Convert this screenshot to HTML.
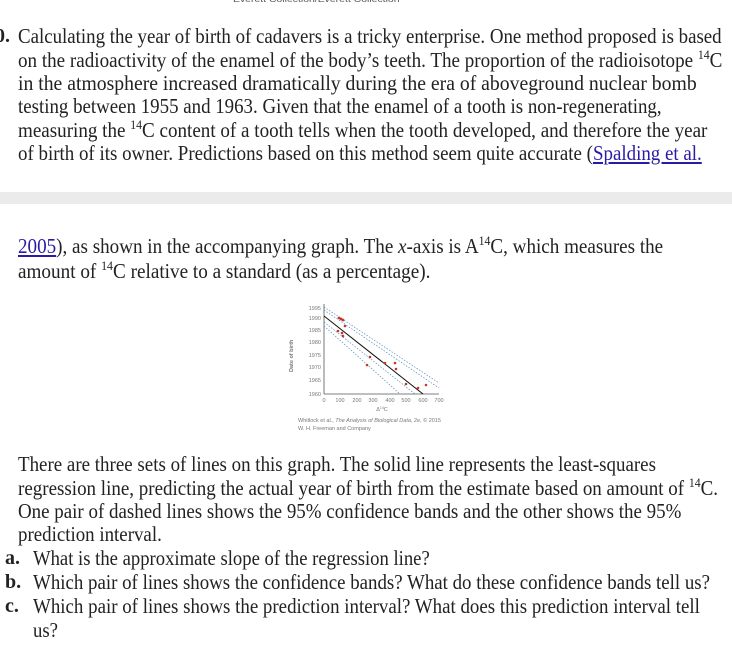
<!DOCTYPE html>
<html><head><meta charset="utf-8"><style>
html,body{margin:0;padding:0;background:#fff;width:732px;height:654px;overflow:hidden;position:relative}
.l{position:absolute;white-space:nowrap;font-family:"Liberation Serif",serif;font-size:21px;line-height:24px;color:#222;transform-origin:0 0;transform:scaleX(0.85)}
sup{font-size:13px;vertical-align:0;position:relative;top:-8px}
a{color:#2a1aa8;text-decoration:underline}
.b{position:absolute;font-family:"Liberation Serif",serif;font-size:20px;line-height:24px;font-weight:bold;color:#222}
svg{position:absolute;left:0;top:0}
.g{font-family:"Liberation Sans",sans-serif;font-size:5.5px;fill:#777}
.h{position:absolute;left:233px;top:-5px;font:8px 'Liberation Sans',sans-serif;color:#555;white-space:nowrap;transform-origin:0 0}
</style></head><body>
<div class="h" data-w="167">Everett Collection/Everett Collection</div>
<div style="position:absolute;left:0;top:192px;width:732px;height:12px;background:#ebebeb"></div>
<div class="b" style="left:-5px;top:24px">0.</div>
<div class="l" data-w="704" style="left:18px;top:24px">Calculating the year of birth of cadavers is a tricky enterprise. One method proposed is based</div>
<div class="l" data-w="704" style="left:18px;top:48px">on the radioactivity of the enamel of the body’s teeth. The proportion of the radioisotope <sup>14</sup>C</div>
<div class="l" data-w="679" style="left:18px;top:71px">in the atmosphere increased dramatically during the era of aboveground nuclear bomb</div>
<div class="l" data-w="644" style="left:18px;top:94px">testing between 1955 and 1963. Given that the enamel of a tooth is non-regenerating,</div>
<div class="l" data-w="689" style="left:18px;top:118px">measuring the <sup>14</sup>C content of a tooth tells when the tooth developed, and therefore the year</div>
<div class="l" data-w="684" style="left:18px;top:141px">of birth of its owner. Predictions based on this method seem quite accurate (<a>Spalding et al.</a></div>
<div class="l" data-w="645" style="left:18px;top:234px"><a>2005</a>), as shown in the accompanying graph. The <i>x</i>-axis is A<sup>14</sup>C, which measures the</div>
<div class="l" data-w="412" style="left:18px;top:259px">amount of <sup>14</sup>C relative to a standard (as a percentage).</div>
<div class="l" data-w="638" style="left:18px;top:452px">There are three sets of lines on this graph. The solid line represents the least-squares</div>
<div class="l" data-w="700" style="left:18px;top:476px">regression line, predicting the actual year of birth from the estimate based on amount of <sup>14</sup>C.</div>
<div class="l" data-w="663" style="left:18px;top:499px">One pair of dashed lines shows the 95% confidence bands and the other shows the 95%</div>
<div class="l" data-w="144" style="left:18px;top:522px">prediction interval.</div>
<div class="b" style="left:5px;top:546px">a.</div>
<div class="l" data-w="397" style="left:33px;top:546px">What is the approximate slope of the regression line?</div>
<div class="b" style="left:5px;top:570px">b.</div>
<div class="l" data-w="677" style="left:33px;top:570px">Which pair of lines shows the confidence bands? What do these confidence bands tell us?</div>
<div class="b" style="left:5px;top:594px">c.</div>
<div class="l" data-w="667" style="left:33px;top:594px">Which pair of lines shows the prediction interval? What does this prediction interval tell</div>
<div class="l" data-w="25" style="left:33px;top:618px">us?</div>
<svg width="732" height="654" xmlns="http://www.w3.org/2000/svg">
<line x1="324" y1="304" x2="324" y2="394" stroke="#555" stroke-width="0.8"/>
<line x1="324" y1="394" x2="439" y2="394" stroke="#555" stroke-width="0.8"/>
<g stroke="#5a8ac0" stroke-width="0.7" stroke-dasharray="1.5,1.5">
<line x1="324" y1="307" x2="439" y2="383"/>
<line x1="324" y1="310" x2="439" y2="388"/>
<line x1="324" y1="322" x2="415" y2="394"/>
<line x1="324" y1="326" x2="400" y2="394"/>
</g>
<line x1="324" y1="316" x2="423" y2="394" stroke="#111" stroke-width="1"/>
<g fill="#c0392b">
<circle cx="339" cy="318" r="1.4"/><circle cx="341" cy="319" r="1.4"/><circle cx="343" cy="320" r="1.4"/>
<circle cx="338" cy="331" r="1.3"/><circle cx="342" cy="333" r="1.3"/><circle cx="345" cy="326" r="1.3"/><circle cx="343" cy="336" r="1.3"/>
<circle cx="370" cy="357" r="1.3"/><circle cx="367" cy="365" r="1.3"/><circle cx="385" cy="363" r="1.3"/><circle cx="396" cy="369" r="1.3"/>
<circle cx="406" cy="384" r="1.3"/><circle cx="418" cy="388" r="1.3"/><circle cx="426" cy="385" r="1.3"/><circle cx="395" cy="363" r="1.3"/>
</g>
<g class="g" text-anchor="end">
<text x="321" y="310">1995</text><text x="321" y="320">1990</text><text x="321" y="332">1985</text><text x="321" y="344">1980</text><text x="321" y="357">1975</text><text x="321" y="369">1970</text><text x="321" y="382">1965</text><text x="321" y="396">1960</text>
</g>
<g class="g" text-anchor="middle">
<text x="324" y="402">0</text><text x="340" y="402">100</text><text x="357" y="402">200</text><text x="373" y="402">300</text><text x="390" y="402">400</text><text x="406" y="402">500</text><text x="423" y="402">600</text><text x="439" y="402">700</text>
<text x="382" y="411">Δ<tspan font-size="3.5" dy="-2">14</tspan><tspan dy="2">C</tspan></text>
</g>
<text class="g" transform="translate(293,372) rotate(-90)" font-weight="bold">Date of birth</text>
<text class="g" x="298" y="422">Whitlock et al., <tspan font-style="italic">The Analysis of Biological Data</tspan>, 2e, © 2015</text>
<text class="g" x="298" y="430">W. H. Freeman and Company</text>
</svg>
<script>
document.querySelectorAll('.l,.h').forEach(function(e){
  var w=e.scrollWidth; var t=+e.getAttribute('data-w');
  if(w>0) e.style.transform='scaleX('+(t/w)+')';
});
</script>
</body></html>
